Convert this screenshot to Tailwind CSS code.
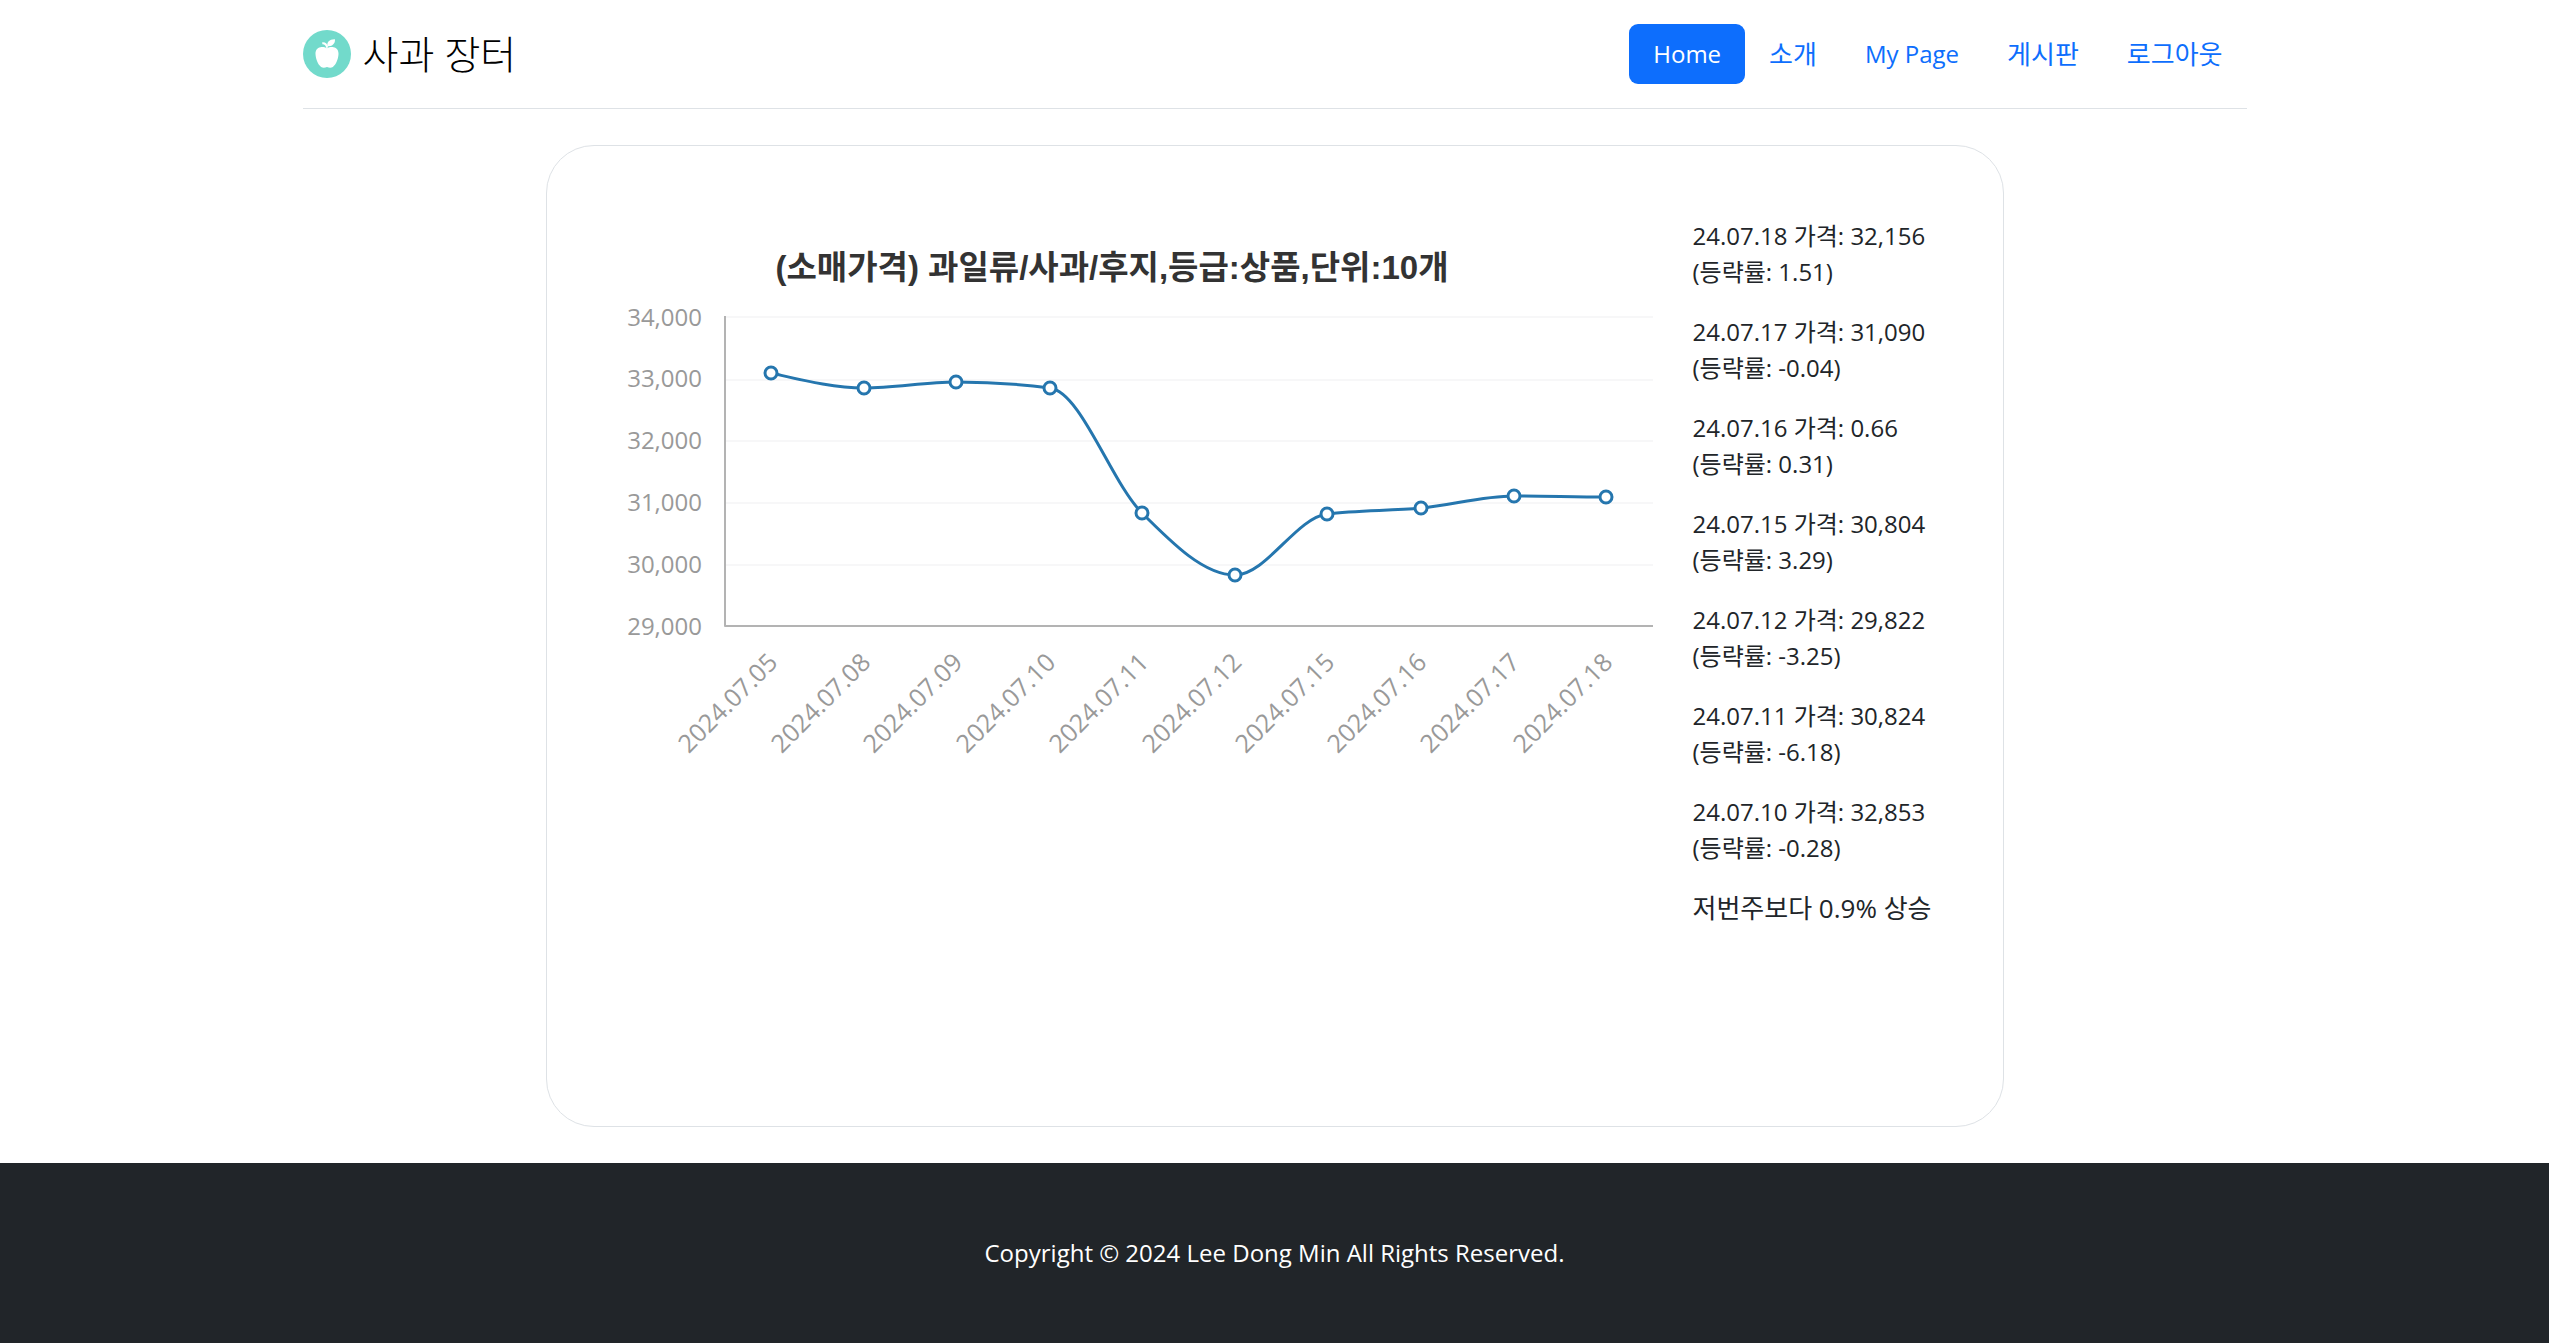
<!DOCTYPE html>
<html lang="ko">
<head>
<meta charset="utf-8">
<meta name="viewport" content="width=device-width, initial-scale=1">
<title>사과 장터</title>
<script src="https://cdn.jsdelivr.net/npm/@tailwindcss/browser@4"></script>
</head>
<body class="flex min-h-screen flex-col bg-white font-['Open_Sans','Noto_Sans_CJK_KR',sans-serif] text-2xl/9 text-[#212529]">
  <header class="mx-auto mb-9 flex w-full max-w-[1944px] flex-wrap items-center justify-between border-b border-[#dee2e6] py-6">
    <a href="#" class="flex items-center gap-3 text-black">
      <svg class="size-12" viewBox="0 0 48 48" aria-hidden="true">
        <circle cx="24" cy="24" r="24" fill="#72dacb"/>
        <path fill="#fff" d="M24 18.300c1.900-1 4.300-1.500 6.500-1.100 3.400.6 5.200 3.400 5 6.900-.3 5.300-2.500 10.700-5.600 12.800-1.800 1.200-3.700.9-5.900.2-2.200.7-4.100 1-5.900-.2-3.100-2.100-5.300-7.500-5.600-12.800-.2-3.500 1.600-6.300 5-6.900 2.200-.4 4.600.1 6.500 1.100z"/>
        <path fill="#fff" d="M24.400 16.200c-.9-3.900 2.200-7.100 7.500-6.900.6 4-2.700 7.600-7.500 6.900z"/>
        <path d="M19.300 13.200c2.400-.2 4.300 1.300 4.900 4.500" fill="none" stroke="#fff" stroke-width="2"/>
      </svg>
      <span class="text-[39px]/12 font-light">사과 장터</span>
    </a>
    <nav>
      <ul class="flex flex-wrap text-[#0d6efd]">
        <li><a href="#" aria-current="page" class="block rounded-[9px] bg-[#0d6efd] px-6 py-3 text-white">Home</a></li>
        <li><a href="#" class="block px-6 py-3 text-[26px]/9">소개</a></li>
        <li><a href="#" class="block px-6 py-3">My Page</a></li>
        <li><a href="#" class="block px-6 py-3 text-[26px]/9">게시판</a></li>
        <li><a href="#" class="block px-6 py-3 text-[26px]/9">로그아웃</a></li>
      </ul>
    </nav>
  </header>

  <main class="mx-auto mb-9 w-full max-w-[1944px]">
    <section class="mx-auto flex w-3/4 items-start gap-9 rounded-[48px] border border-[#dee2e6] px-12 pt-[72px] pb-50">
      <svg class="min-w-0 flex-1" viewBox="1 0 1062 600" role="img" aria-label="사과 소매가격 추이">
        <text x="518" y="61" text-anchor="middle" class="fill-[#333] font-['Liberation_Sans','Noto_Sans_CJK_KR',sans-serif] text-[33px] font-bold">(소매가격) 과일류/사과/후지,등급:상품,단위:10개</text>
        <path d="M131 99H1059M131 162H1059M131 223H1059M131 285H1059M131 347H1059" stroke="#f7f7f8" stroke-width="2"/>
        <path d="M131 98V408H1059" fill="none" stroke="#b3b3b3" stroke-width="2" stroke-linejoin="round"/>
        <g text-anchor="end" class="fill-[#999] text-2xl">
          <text x="108" y="108">34,000</text>
          <text x="108" y="169">33,000</text>
          <text x="108" y="231">32,000</text>
          <text x="108" y="293">31,000</text>
          <text x="108" y="355">30,000</text>
          <text x="108" y="417">29,000</text>
        </g>
        <g text-anchor="end" class="fill-[#999] text-[25px]">
          <text transform="translate(185 446) rotate(-45)">2024.07.05</text>
          <text transform="translate(278 446) rotate(-45)">2024.07.08</text>
          <text transform="translate(370 446) rotate(-45)">2024.07.09</text>
          <text transform="translate(463 446) rotate(-45)">2024.07.10</text>
          <text transform="translate(556 446) rotate(-45)">2024.07.11</text>
          <text transform="translate(649 446) rotate(-45)">2024.07.12</text>
          <text transform="translate(742 446) rotate(-45)">2024.07.15</text>
          <text transform="translate(834 446) rotate(-45)">2024.07.16</text>
          <text transform="translate(927 446) rotate(-45)">2024.07.17</text>
          <text transform="translate(1020 446) rotate(-45)">2024.07.18</text>
        </g>
        <path fill="none" stroke="#2576ae" stroke-width="3" d="M177 155C208 162 239 170 270 170C301 170 331 164 362 164C393 164 425 166 456 170C487 174 517 264 548 295C579 326 610 357 641 357C672 357 702 300 733 296C764 292 796 293 827 290C858 287 889 278 920 278C951 278 981 279 1012 279"/>
        <g fill="#fff" stroke="#2576ae" stroke-width="3">
          <circle cx="177" cy="155" r="6"/><circle cx="270" cy="170" r="6"/><circle cx="362" cy="164" r="6"/><circle cx="456" cy="170" r="6"/><circle cx="548" cy="295" r="6"/>
          <circle cx="641" cy="357" r="6"/><circle cx="733" cy="296" r="6"/><circle cx="827" cy="290" r="6"/><circle cx="920" cy="278" r="6"/><circle cx="1012" cy="279" r="6"/>
        </g>
      </svg>
      <aside class="flex w-[262px] shrink-0 flex-col gap-6">
        <p>24.07.18 가격: 32,156<br>(등략률: 1.51)</p>
        <p>24.07.17 가격: 31,090<br>(등략률: -0.04)</p>
        <p>24.07.16 가격: 0.66<br>(등략률: 0.31)</p>
        <p>24.07.15 가격: 30,804<br>(등략률: 3.29)</p>
        <p>24.07.12 가격: 29,822<br>(등략률: -3.25)</p>
        <p>24.07.11 가격: 30,824<br>(등략률: -6.18)</p>
        <p>24.07.10 가격: 32,853<br>(등략률: -0.28)</p>
        <p class="text-[26px]/9">저번주보다 0.9% 상승</p>
      </aside>
    </section>
  </main>

  <footer class="grow bg-[#212529] py-[72px] text-center text-white">
    <p>Copyright © 2024 Lee Dong Min All Rights Reserved.</p>
  </footer>
</body>
</html>
